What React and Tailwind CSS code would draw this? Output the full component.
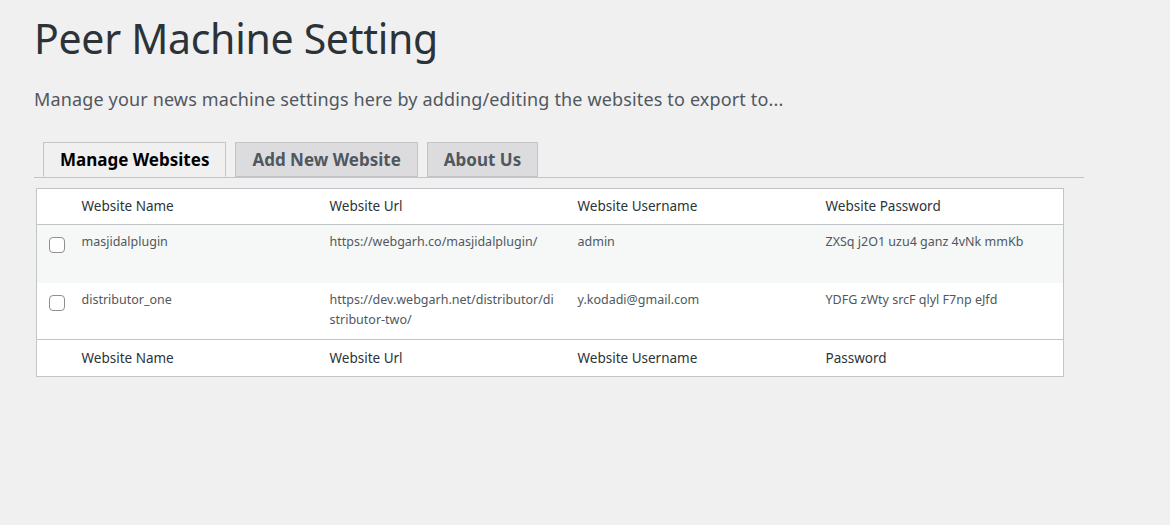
import React from 'react';

const sites = [
  {
    id: 1,
    name: 'masjidalplugin',
    url: 'https://webgarh.co/masjidalplugin/',
    user: 'admin',
    pass: 'ZXSq j2O1 uzu4 ganz 4vNk mmKb',
  },
  {
    id: 2,
    name: 'distributor_one',
    url: 'https://dev.webgarh.net/distributor/distributor-two/',
    user: 'y.kodadi@gmail.com',
    pass: 'YDFG zWty srcF qlyl F7np eJfd',
  },
];

const Checkbox = () => (
  <span className="block w-4 h-4 rounded-[4px] border border-[#8c8f94] bg-white" />
);

const App = () => {
  return (
    <div
      className="min-h-[525px] bg-[#f0f0f1] text-[#3c434a] pl-[34px] pt-[10px]"
      style={{ fontFamily: '"Noto Sans", "Open Sans", sans-serif' }}
    >
      <h1 className="text-[41px] leading-[56px] text-[#2c3338] tracking-[-0.3px]">Peer Machine Setting</h1>
      <p className="mt-[21px] text-[18px] leading-[24px] text-[#50575e] tracking-[0.15px]">
        Manage your news machine settings here by adding/editing the websites to export to...
      </p>

      <div className="mt-[31px] w-[1050px] flex gap-[9px] pl-[9px] border-b border-[#c3c4c7]">
        <div className="-mb-px h-[35px] pt-px px-[16px] flex items-center border border-[#c3c4c7] border-b-[#f0f0f1] bg-[#f0f0f1] text-[17px] font-bold text-black">
          Manage Websites
        </div>
        <div className="h-[35px] pt-px px-[16px] flex items-center border border-[#c3c4c7] bg-[#dcdcde] text-[17px] font-bold text-[#50575e]">
          Add New Website
        </div>
        <div className="h-[35px] pt-px px-[16px] flex items-center border border-[#c3c4c7] bg-[#dcdcde] text-[17px] font-bold text-[#50575e]">
          About Us
        </div>
      </div>

      <table className="mt-[10px] ml-[2px] w-[1028px] table-fixed border border-[#c3c4c7] bg-white text-left text-[#2c3338] border-collapse">
        <thead>
          <tr className="h-[36px] border-b border-[#c3c4c7]">
            <th className="w-[35px]"></th>
            <th className="w-[248px] px-[10px] text-[13.5px] font-normal">Website Name</th>
            <th className="w-[248px] px-[10px] text-[13.5px] font-normal">Website Url</th>
            <th className="w-[248px] px-[10px] text-[13.5px] font-normal">Website Username</th>
            <th className="px-[10px] text-[13.5px] font-normal">Website Password</th>
          </tr>
        </thead>
        <tbody className="text-[12.5px] leading-[20px] text-[#50575e]">
          {sites.map((s, i) => (
            <tr key={s.id} className={i % 2 === 0 ? 'h-[58px] bg-[#f6f7f7] align-top' : 'h-[57px] bg-white align-top'}>
              <td className="pl-[12px] pt-[12px]"><Checkbox /></td>
              <td className="px-[10px] pt-[7px]">{s.name}</td>
              <td className="px-[10px] pt-[7px] break-all">{s.url}</td>
              <td className="px-[10px] pt-[7px]">{s.user}</td>
              <td className="px-[10px] pt-[7px]">{s.pass}</td>
            </tr>
          ))}
        </tbody>
        <tfoot>
          <tr className="h-[37px] border-t border-[#c3c4c7]">
            <th></th>
            <th className="px-[10px] text-[13.5px] font-normal">Website Name</th>
            <th className="px-[10px] text-[13.5px] font-normal">Website Url</th>
            <th className="px-[10px] text-[13.5px] font-normal">Website Username</th>
            <th className="px-[10px] text-[13.5px] font-normal">Password</th>
          </tr>
        </tfoot>
      </table>
    </div>
  );
};

export default App;
